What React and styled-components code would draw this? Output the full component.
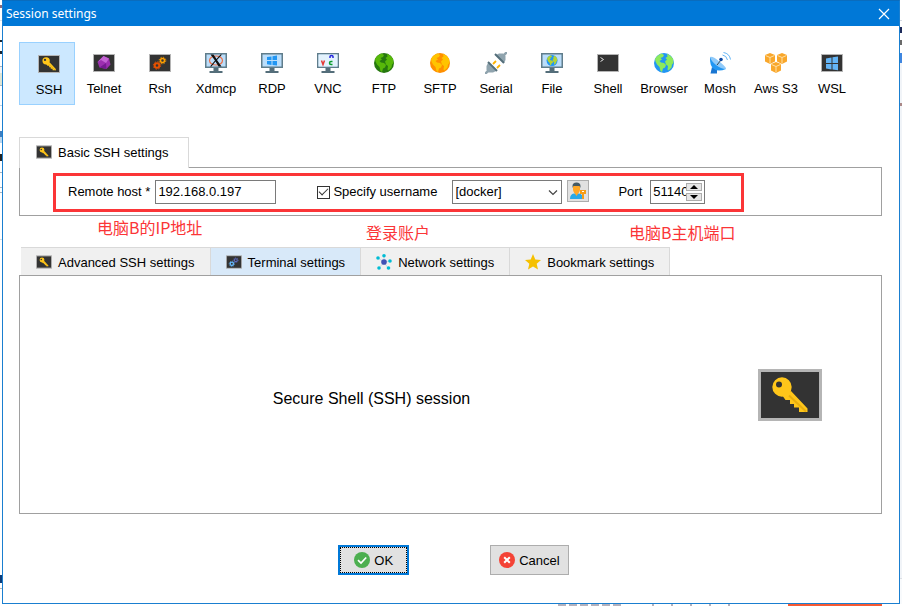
import React, { useState } from "react";
import styled, { createGlobalStyle, css } from "styled-components";

const GlobalStyle = createGlobalStyle`
  *, *::before, *::after { box-sizing: border-box; }
  body { margin: 0; background: #fff; color: #000; font: 13px/15px "Liberation Sans", Arial, sans-serif; }
  button, input, select { font: inherit; color: inherit; margin: 0; }
  svg { display: block; }
`;

const Desktop = styled.div`
  display: grid;
  grid-template-columns: 2px minmax(0, 1fr) 2px;
  grid-template-rows: 1fr 2px;
  min-height: 100vh;
`;

const LeftEdge = styled.div`
  background: linear-gradient(
    #fff 5px, #8a6a7c 5px 8px, #fff 8px 20px, #dde3ea 20px 21px, #fff 21px 40px,
    #1c2630 40px 42px, #fff 42px 51px, #1c2630 51px 54px, #fff 54px 66px,
    #a9b4bd 66px 67px, #f2f4f6 67px 73px, #dfe5d4 73px 85px, #a9b4bd 85px 86px,
    #fff 86px 105px, #bcd3e8 105px 106px, #fff 106px 131px, #3f7fc0 131px 137px,
    #b9d6ef 137px 143px, #fff 143px 154px, #222 154px 161px, #fff 161px 172px,
    #a9b4bd 172px 173px, #fff 173px 187px, #a9b4bd 187px 188px, #fff 188px 192px,
    #a9b4bd 192px 193px, #fff 193px 239px, #d6dde3 239px 240px, #fff 240px 575px,
    #0d3c78 575px 583px, #fff 583px 588px, #b5b5b5 588px 589px, #fff 589px
  );
`;

const RightEdge = styled.div`
  background: linear-gradient(
    #fff 20px, #d4dae2 20px 21px, #fff 21px 27px, #1d2b5a 27px 33px, #fff 33px 40px,
    #6a6a6a 40px 45px, #fff 45px 53px, #3f86e0 53px 63px, #f1f4f8 63px 103px,
    #a88 103px 106px, #f1f4f8 106px 578px, #dcdfe4 578px 579px, #f8fafc 579px
  );
`;

const BottomEdge = styled.div`
  grid-column: 1 / -1;
  height: 2px;
  background:
    linear-gradient(#f65a33, #f65a33) right 20px top / 94px 2px no-repeat,
    repeating-linear-gradient(90deg, #b3b1bd 0 8px, #fff 8px 11px) right 279px top / 65px 2px no-repeat,
    repeating-linear-gradient(90deg, #b3b1bd 0 2px, #fff 2px 19px) right 164px top / 86px 2px no-repeat,
    #fff;
`;

const Dialog = styled.main`
  display: flex;
  flex-direction: column;
  border: 1px solid #1a7fd0;
  border-top-color: #0a6cbd;
  background: #fff;
  min-width: 0;
`;

const TitleBar = styled.header`
  display: flex;
  align-items: center;
  justify-content: space-between;
  height: 25px;
  padding: 0 9px 0 3px;
  background: #0078d7;
  color: #fff;
`;

const Title = styled.h1`
  margin: 0;
  font: 400 12px/16px "Noto Sans", "Open Sans", sans-serif;
`;

const CloseButton = styled.button`
  display: grid;
  place-items: center;
  padding: 0;
  border: 0;
  background: none;
`;

const Body = styled.div`
  display: flex;
  flex: 1;
  flex-direction: column;
  padding: 16px 17px 28px 16px;
`;

const SessionTypes = styled.nav`
  display: grid;
  grid-template-columns: repeat(auto-fill, 56px);
  margin-bottom: 32px;
`;

const SessionType = styled.button`
  display: flex;
  flex-direction: column;
  align-items: center;
  gap: 7px;
  padding: 9px 0 8px 2px;
  border: 1px solid transparent;
  background: none;
  white-space: nowrap;
  ${(p) => p.$active && css`
    padding: 10px 0 7px 4px;
    border-color: #99d1ff;
    background: #cce8ff;
  `}
`;

const BasicTabs = styled.div`
  display: flex;
  z-index: 1;
`;

const SettingsTabs = styled.div`
  display: flex;
  padding-left: 2px;
`;

const Tab = styled.button`
  display: flex;
  align-items: center;
  gap: 6px;
  height: 28px;
  padding: 1px 15px 0;
  border: solid #d9d9d9;
  border-width: 1px 1px 0 0;
  background: ${(p) => (p.$active ? "#d8e9f9" : "#f0f0f0")};
  white-space: nowrap;
`;

const FrontTab = styled(Tab)`
  height: 31px;
  margin-bottom: -1px;
  padding: 0 19px 2px 16px;
  border-width: 1px 1px 0 1px;
  background: #fff;
`;

const BasicPanel = styled.section`
  padding: 5px 16px 3px 33px;
  border: 1px solid #a0a0a0;
`;

const Highlight = styled.div`
  display: flex;
  align-items: flex-start;
  width: fit-content;
  padding: 4px 36px 5px 12px;
  border: 3px solid #fb3537;
`;

const Field = styled.div`
  display: flex;
  align-items: center;
  gap: ${(p) => p.$gap}px;
  height: 24px;
  margin-right: ${(p) => p.$after || 0}px;
  white-space: nowrap;
  label { padding-bottom: 2px; }
`;

const TextInput = styled.input`
  width: 121px;
  height: 24px;
  padding: 0 2px 2px;
  border: 1px solid #7a7a7a;
  background: #fff;
  outline: 0;
`;

const Checkbox = styled.input`
  display: grid;
  place-items: center;
  width: 13px;
  height: 13px;
  appearance: none;
  border: 1px solid #333;
  background: #fff;
  &:checked::after {
    content: "";
    width: 9px;
    height: 5px;
    margin-top: -3px;
    border: solid #333;
    border-width: 0 0 1px 1px;
    transform: rotate(-45deg);
  }
`;

const SelectBox = styled.div`
  position: relative;
  svg { position: absolute; right: 4px; top: 10px; pointer-events: none; }
`;

const Select = styled.select`
  width: 110px;
  height: 24px;
  padding: 0 20px 2px 2px;
  appearance: none;
  border: 1px solid #7a7a7a;
  border-radius: 0;
  background: #fff;
`;

const UserButton = styled.button`
  display: grid;
  place-items: center;
  align-self: flex-start;
  width: 22px;
  height: 22px;
  padding: 0;
  border: 1px solid #adadad;
  background: #e1e1e1;
`;

const Spinner = styled.div`
  display: flex;
  align-items: center;
  width: 55px;
  height: 24px;
  padding-right: 2px;
  border: 1px solid #7a7a7a;
`;

const SpinnerInput = styled.input`
  flex: 1;
  min-width: 0;
  height: 22px;
  padding: 0 0 2px 2px;
  border: 0;
  background: none;
  outline: 0;
`;

const SpinnerArrows = styled.div`
  display: grid;
  gap: 2px;
`;

const Arrow = styled.button`
  display: grid;
  place-items: center;
  width: 16px;
  height: 8px;
  padding: 0;
  border: 1px solid #adadad;
  background: #e6e6e6;
`;

const Notes = styled.div`
  display: grid;
  grid-template-columns: 269px 263px 1fr;
  height: 31px;
  padding: 0 0 4px 78px;
  color: #fb3537;
  font: 16px/22px "Noto Sans CJK SC", sans-serif;
`;

const Note = styled.span`
  align-self: ${(p) => (p.$low ? "end" : "start")};
  white-space: nowrap;
`;

const SessionPanel = styled.section`
  display: grid;
  flex: 1;
  grid-template-columns: 1fr 123px;
  align-items: center;
  min-height: 239px;
  border: 1px solid #a0a0a0;
`;

const SessionName = styled.h2`
  margin: 0;
  padding: 9px 35px 0 0;
  font-size: 16px;
  font-weight: 400;
  line-height: 20px;
  text-align: center;
`;

const Actions = styled.footer`
  display: flex;
  justify-content: center;
  gap: 81px;
  margin-top: 31px;
  padding-left: 6px;
`;

const ActionButton = styled.button`
  display: flex;
  align-items: center;
  justify-content: center;
  gap: 4px;
  height: 30px;
  padding: 0 8px;
  border: 1px solid #adadad;
  background: #e1e1e1;
  ${(p) => p.$primary && css`
    padding: 0 14px;
    border: 2px solid #0078d7;
    outline: 1px dotted #000;
    outline-offset: -3px;
  `}
`;

const Svg = ({ w = 22, h = 22, box, children }) => (
  <svg width={w} height={h} viewBox={box || `0 0 ${w} ${h}`} aria-hidden="true">{children}</svg>
);

const Screen = () => (
  <rect x="0.5" y="2.5" width="21" height="17" fill="#333" stroke="#b5b5b5" />
);

const KeyShape = () => (
  <>
    <path fill="#ffc61a" d="M33 22l16.500 17.500V43h-8.500v-4.500h-5V35h-4v-4h-4.500L24 26z" />
    <path fill="#ffc61a" fillRule="evenodd" d="M14.300 18a9.700 9.700 0 1 0 19.400 0 9.700 9.700 0 1 0-19.400 0zM18 15.500a3 3 0 1 1 6 0 3 3 0 1 1-6 0z" />
    <path d="M31 26.500l17 16" stroke="#e8ae0e" strokeWidth="2" />
  </>
);

const KeyScreen = ({ w, h }) => (
  <Svg w={w} h={h} box="0 0 64 52">
    <rect x="1.5" y="1.5" width="61" height="49" fill="#333" stroke="#b5b5b5" strokeWidth={w > 30 ? 3 : 4} />
    <KeyShape />
  </Svg>
);

const SshIcon = () => (
  <Svg>
    <Screen />
    <g transform="translate(-1 1) scale(.38)"><KeyShape /></g>
  </Svg>
);

const TelnetIcon = () => (
  <Svg>
    <Screen />
    <path fill="#9c2fb0" d="M10.5 4l5.500 2.500 1.500 6-4 4.500-7-1.500-2-5.500z" />
    <path fill="#c463d4" d="M10.5 4L8 8l-3.500 2zM10.5 4L16 6.500 13 11 8 8z" />
    <path fill="#751b91" d="M13 11l.5 6-7-1.500z" />
  </Svg>
);

const Gears = ({ a, b }) => (
  <g fill="none">
    <circle cx="8" cy="13.500" r="2.300" stroke={a} strokeWidth="2" />
    <circle cx="8" cy="13.500" r="3.700" stroke={a} strokeDasharray="1.400 1.500" />
    <circle cx="13.500" cy="8.500" r="2" stroke={b} strokeWidth="1.500" />
    <circle cx="13.500" cy="8.500" r="3.300" stroke={b} strokeDasharray="1.300 1.300" />
  </g>
);

const RshIcon = () => <Svg><Screen /><Gears a="#e65100" b="#ffa000" /></Svg>;

const Monitor = ({ children }) => (
  <Svg>
    <path fill="#607d8b" d="M0 1h22v15H0z" />
    <path fill="#bbdefb" d="M1.500 2.500h19v12h-19z" />
    <path fill="#546e7a" d="M8.500 16h5v3h4v2H4.500v-2h4z" />
    {children}
  </Svg>
);

const WinLogo = ({ dark }) => (
  <path fill={dark ? "#64b5f6" : "#2196f3"} d={dark
    ? "M5 6.500l5.500-1V11H5zM11.500 5.300L17 4.500V11h-5.500zM5 12h5.500v5.400L5 16.500zM11.500 12H17v6.300l-5.500-.800z"
    : "M6 5L10.500 4.500v3.500H6zM11.500 4.300L16 3.500V8h-4.500zM6 9h4.500v4L6 12.300zM11.500 9H16v4.500l-4.500-.6z"} />
);

const XdmcpIcon = () => (
  <Monitor>
    <ellipse cx="11" cy="8.500" rx="6.500" ry="4.500" fill="none" stroke="#ef6c42" strokeWidth="1.200" />
    <path fill="#111" d="M5.500 2.500h3l3 4.500 4-4.500H17l-5 5.500 4.500 6.500h-3l-3-5-4 5H5l5-6z" />
  </Monitor>
);

const VncIcon = () => (
  <Monitor>
    <path fill="#e3f2fd" d="M1.500 2.500h19v12h-19z" />
    <g fill="none" strokeWidth="1.500">
      <path stroke="#e53935" d="M4.500 8.500l1.500 4 1.500-4" />
      <path stroke="#2323dc" d="M13 6V4.500q0-1 1.500-1T16 4.500V6" />
      <path stroke="#0a9c2d" d="M15.500 9.500h-1.500q-1.500 0-1.500 1.500t1.500 1.500h1.500" />
    </g>
  </Monitor>
);

const Earth = ({ sea, land }) => (
  <>
    <circle cx="11" cy="11" r="10" fill={sea} />
    <path fill={land} d="M2 7Q4 3 8.500 1.500L11 3 10 5 7.500 6 9 7.500 6.500 9 8 10.500l3 .5 2 2-1 2.500-2 1-1 3.500-1.500-1-1-4L4 12.500 2.500 9.500zM14 1.700q4 1.300 6 5l.5 4.300-1.500 1.500-.5 3-3 3-1-1 .5-3.500-2-1.500-1-3 2-2-1.500-1.500 2-1.500z" />
  </>
);

const FtpIcon = () => <Svg><Earth sea="#26780f" land="#57b80a" /></Svg>;
const SftpIcon = () => <Svg><Earth sea="#ff8f00" land="#ffc400" /></Svg>;
const BrowserIcon = () => <Svg><Earth sea="#2196f3" land="#8dea5c" /></Svg>;

const SerialIcon = () => (
  <Svg>
    <path d="M0 22l4-4M18 4l4-4" stroke="#90a4ae" strokeWidth="2.500" />
    <path fill="#90a4ae" d="M3 11l8 8-3 1.500H3.500L1.500 18v-4zM11 3l8 8 1.500-3V4L18 1.500h-4z" />
    <path d="M3 10l9 9M10 2l9 9" stroke="#546e7a" strokeWidth="2" />
    <path d="M8 12l3-3M12 16l3-3" stroke="#ffb300" strokeWidth="1.800" />
  </Svg>
);

const FileIcon = () => (
  <Monitor><g transform="translate(5 2.500) scale(.55)"><Earth sea="#2196f3" land="#b3d334" /></g></Monitor>
);

const ShellIcon = () => (
  <Svg><Screen /><path d="M3.500 5.500l3 2-3 2" fill="none" stroke="#e0e0e0" /></Svg>
);

const MoshIcon = () => (
  <Svg>
    <path fill="#1976d2" d="M3 15l5 3v3.500H1.500z" />
    <path fill="#2196f3" d="M1 5q-.5 9 4 12t12 0z" />
    <path fill="#90caf9" d="M1 5q3-1 10 5t6 7Q12 17 7 13T1 5z" />
    <path d="M8 13l4-5" stroke="#37474f" /><circle cx="12" cy="7.500" r="1.800" fill="#0d47a1" />
    <path d="M13.500 3q4 .5 5 5M14.500.5q6 1 7 7" fill="none" stroke="#64b5f6" />
  </Svg>
);

const Cube = ({ x, y }) => (
  <g transform={`translate(${x} ${y})`}>
    <path fill="#f9a72b" d="M5 0l5 2v6.500L5 11 0 8.500V2z" />
    <path d="M.5 2.500L5 4.500l4.500-2M5 4.500V10.500" fill="none" stroke="#ffe0a6" />
  </g>
);

const AwsIcon = () => <Svg><Cube x={0} y={1} /><Cube x={12} y={1} /><Cube x={6} y={10} /></Svg>;
const WslIcon = () => <Svg><Screen /><WinLogo dark /></Svg>;

const TerminalTabIcon = () => (
  <Svg w={16} h={14} box="0 2 22 18"><Screen /><Gears a="#64b5f6" b="#5c6bc0" /></Svg>
);

const NetworkIcon = () => (
  <Svg w={16} h={16}>
    <path d="M8 8V2M8 8L2 4M8 8l6-1M8 8l-5 6M8 8l4 6" stroke="#c8dce4" />
    <circle cx="8" cy="8" r="2.800" fill="#3f51b5" />
    <g fill="#00bcd4">
      <circle cx="8" cy="1.800" r="1.800" /><circle cx="2" cy="4" r="1.800" /><circle cx="14" cy="7" r="1.800" />
      <circle cx="3" cy="14" r="1.800" /><circle cx="12.500" cy="14" r="1.800" />
    </g>
  </Svg>
);

const StarIcon = () => (
  <Svg w={16} h={16}>
    <path fill="#f5c000" d="M8 0l2.300 5.500 5.700.500-4.300 3.800L13 15.500l-5-3-5 3 1.300-5.700L0 6l5.700-.500z" />
  </Svg>
);

const UserIcon = () => (
  <Svg w={18} h={18}>
    <path fill="#29a9e8" d="M1 17q0-5 4-5.500h5q4 .5 4 5.500z" />
    <path fill="#ffa726" d="M4 4h7v4q-1 4-3.500 4T4 8zM5.500 11h4l-2 3z" />
    <path fill="#455a64" d="M3.500 6V4q0-3.500 4-3.500T11.500 4v2l-1-2h-6z" />
    <path fill="#f59d16" d="M11 8h6v4h-2v5h-2v-5h-2z" /><path fill="#fff" d="M13 9h2v1h-2z" />
  </Svg>
);

const OkIcon = () => (
  <Svg w={16} h={16}>
    <circle cx="8" cy="8" r="8" fill="#4caf50" />
    <path d="M4 8.200l3 2.800 5.200-5.500" fill="none" stroke="#fff" strokeWidth="1.700" />
  </Svg>
);

const CancelIcon = () => (
  <Svg w={16} h={16}>
    <circle cx="8" cy="8" r="8" fill="#f44336" />
    <path d="M5.200 5.200l5.600 5.600M10.800 5.200l-5.600 5.600" stroke="#fff" strokeWidth="2" />
  </Svg>
);

const SESSION_TYPES = [
  ["SSH", SshIcon],
  ["Telnet", TelnetIcon],
  ["Rsh", RshIcon],
  ["Xdmcp", XdmcpIcon],
  ["RDP", () => <Monitor><WinLogo /></Monitor>],
  ["VNC", VncIcon],
  ["FTP", FtpIcon],
  ["SFTP", SftpIcon],
  ["Serial", SerialIcon],
  ["File", FileIcon],
  ["Shell", ShellIcon],
  ["Browser", BrowserIcon],
  ["Mosh", MoshIcon],
  ["Aws S3", AwsIcon],
  ["WSL", WslIcon],
];

const SETTINGS_TABS = [
  ["Advanced SSH settings", () => <KeyScreen w={16} h={14} />],
  ["Terminal settings", TerminalTabIcon],
  ["Network settings", NetworkIcon],
  ["Bookmark settings", StarIcon],
];

export default function App() {
  const [type, setType] = useState("SSH");
  const [tab, setTab] = useState("Terminal settings");
  const [host, setHost] = useState("192.168.0.197");
  const [port, setPort] = useState("51140");
  const step = (n) => setPort(String((Number(port) || 0) + n));

  return (
    <Desktop>
      <GlobalStyle />
      <LeftEdge />
      <Dialog>
        <TitleBar>
          <Title>Session settings</Title>
          <CloseButton aria-label="Close">
            <Svg w={12} h={12}><path d="M1 1l10 10M11 1L1 11" stroke="#fff" strokeWidth="1.200" /></Svg>
          </CloseButton>
        </TitleBar>
        <Body>
          <SessionTypes aria-label="Session type">
            {SESSION_TYPES.map(([name, Icon]) => (
              <SessionType key={name} $active={name === type} aria-pressed={name === type} onClick={() => setType(name)}>
                <Icon />
                {name}
              </SessionType>
            ))}
          </SessionTypes>

          <BasicTabs role="tablist">
            <FrontTab role="tab" aria-selected="true"><KeyScreen w={16} h={14} />Basic SSH settings</FrontTab>
          </BasicTabs>
          <BasicPanel>
            <Highlight>
              <Field $gap={5} $after={41}>
                <label htmlFor="host">Remote host *</label>
                <TextInput id="host" value={host} onChange={(e) => setHost(e.target.value)} />
              </Field>
              <Field $gap={3} $after={15}>
                <Checkbox id="specify" type="checkbox" defaultChecked />
                <label htmlFor="specify">Specify username</label>
              </Field>
              <Field $gap={5} $after={29}>
                <SelectBox>
                  <Select aria-label="Username"><option>[docker]</option></Select>
                  <Svg w={10} h={6}><path d="M1 .5l4 4 4-4" fill="none" stroke="#444" strokeWidth="1.200" /></Svg>
                </SelectBox>
                <UserButton aria-label="Manage users"><UserIcon /></UserButton>
              </Field>
              <Field $gap={8}>
                <label htmlFor="port">Port</label>
                <Spinner>
                  <SpinnerInput id="port" inputMode="numeric" value={port} onChange={(e) => setPort(e.target.value)} />
                  <SpinnerArrows>
                    <Arrow aria-label="Increase port" onClick={() => step(1)}><Svg w={8} h={4}><path d="M4 0l4 4H0z" /></Svg></Arrow>
                    <Arrow aria-label="Decrease port" onClick={() => step(-1)}><Svg w={8} h={4}><path d="M4 4l4-4H0z" /></Svg></Arrow>
                  </SpinnerArrows>
                </Spinner>
              </Field>
            </Highlight>
          </BasicPanel>

          <Notes>
            <Note>电脑B的IP地址</Note>
            <Note $low>登录账户</Note>
            <Note $low>电脑B主机端口</Note>
          </Notes>

          <SettingsTabs role="tablist">
            {SETTINGS_TABS.map(([name, Icon]) => (
              <Tab key={name} role="tab" $active={name === tab} aria-selected={name === tab} onClick={() => setTab(name)}>
                <Icon />
                {name}
              </Tab>
            ))}
          </SettingsTabs>
          <SessionPanel>
            <SessionName>Secure Shell (SSH) session</SessionName>
            <KeyScreen w={64} h={52} />
          </SessionPanel>

          <Actions>
            <ActionButton $primary><OkIcon />OK</ActionButton>
            <ActionButton><CancelIcon />Cancel</ActionButton>
          </Actions>
        </Body>
      </Dialog>
      <RightEdge />
      <BottomEdge />
    </Desktop>
  );
}
